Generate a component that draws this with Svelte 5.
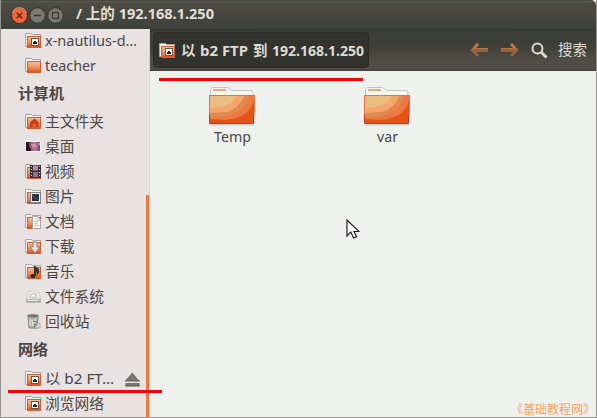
<script>
  const bookmarks = [
    { icon: 'remote', text: 'x-nautilus-d…', width: 92 },
    { icon: 'folder', text: 'teacher', width: 51 }
  ];
  const places = [
    { icon: 'home', text: '主文件夹', width: 59 },
    { icon: 'desktop', text: '桌面', width: 29.5 },
    { icon: 'video', text: '视频', width: 29.5 },
    { icon: 'picture', text: '图片', width: 29.5 },
    { icon: 'document', text: '文档', width: 29.5 },
    { icon: 'download', text: '下载', width: 29.5 },
    { icon: 'music', text: '音乐', width: 29.5 },
    { icon: 'disk', text: '文件系统', width: 59 },
    { icon: 'trash', text: '回收站', width: 44.5 }
  ];
  const network = [
    { icon: 'remote', text: '以 b2 FT…', width: 69, eject: true },
    { icon: 'remote', text: '浏览网络', width: 59 }
  ];
</script>

{#snippet label(text, width, bold = false)}
  <svg class="label" class:bold {width} height="22" viewBox="0 0 {width} 22">
    <text x="0" y="16" textLength={width} lengthAdjust="spacingAndGlyphs">{text}</text>
  </svg>
{/snippet}

{#snippet miniIcon(kind)}
  <svg class="mini" width="17" height="17" viewBox="0 0 17 17">
    {#if kind === 'desktop'}
      <rect x="0.5" y="3" width="15.5" height="11" fill="#faf7f6" />
      <rect x="1" y="4" width="14" height="9" fill="url(#desk)" />
      <path d="M1 4h3v5l2 2v2H1z" fill="#281323" />
      <path d="M6 6h5v2h2V5h2v2h-2v2H7z" fill="#d7a2b7" opacity=".8" />
    {:else if kind === 'disk'}
      <path d="M4 3h9l3 8H1z" fill="#e9e9e6" stroke="#c8c8c4" stroke-width=".7" />
      <path d="M5 8l2-2h4v3l-1 1-2-1-2 1z" fill="#f8f8f6" stroke="#a4a49f" stroke-width=".8" />
      <rect x="1" y="11" width="15" height="3" fill="#b9b9b5" />
      <path d="M1 14h15" stroke="#85857f" stroke-width=".8" />
      <path d="M3 12.5h10" stroke="#efefeb" />
    {:else if kind === 'trash'}
      <path d="M3 4h10l-1 11H4z" fill="#b8b8b3" stroke="#85857f" />
      <ellipse cx="8" cy="3" rx="6" ry="2" fill="#72726c" stroke="#b7b7b2" />
      <path d="M5 6v7M7 7l1 6M10 6v4" stroke="#edede9" />
      <path d="M8 8l4 1M9 14l1-3 3 2z" fill="none" stroke="#696963" stroke-width=".8" />
      <path d="M12 10h3v5h-5v-2h2z" fill="#ddddd8" stroke="#8a8a84" stroke-width=".6" />
    {:else}
      <path d="M.5 14.5v-13h6l1 1h8v12z" fill="#f5f1ef" stroke="#a9a4a3" />
      <rect x="2.5" y="4.5" width="13" height="11" fill="url(#mini-orange)" stroke="#d65a2b" />
      <path d="M3 5.5h12" stroke="#f4c19d" />
      {#if kind === 'remote'}
        <rect x="6.5" y="6.5" width="7" height="7" fill="#fffaf0" stroke="#5f5853" />
        <path d="M8 12v-2h1V9h2v1h1v2z" fill="#24211f" />
      {:else if kind === 'home'}
        <path d="M4 10.2L9.5 5.5l5 4.7h-1V14h-3v-3H8v3H5v-3.8z" fill="#c94017" />
      {:else if kind === 'video'}
        <rect x="5" y="2" width="11" height="13" fill="#383034" />
        <rect x="8" y="2.5" width="5" height="5" fill="#b38bac" /><rect x="8" y="9" width="5" height="5" fill="#9c6994" />
        <path d="M6.5 3v12M14.5 3v12" stroke="#ddd4d4" stroke-dasharray="1 2" />
      {:else if kind === 'picture'}
        <rect x="5.5" y="4.5" width="10" height="10" fill="#f1eeeb" stroke="#827e7c" />
        <rect x="7" y="6" width="7" height="7" fill="#292f42" /><path d="M7 7l6 5" stroke="#59617c" />
      {:else if kind === 'document'}
        <path d="M7.5 3.5h5l3 3v9h-8z" fill="#f8f6f2" stroke="#aaa39e" />
        <path d="M12 4v3h3M9 8.5h5M9 10.5h4M9 12.5h5" fill="none" stroke="#b7b4b0" stroke-width=".8" />
      {:else if kind === 'download'}
        <path d="M8 4h4v5h3l-5 6-5-6h3z" fill="#e4e1de" stroke="#8b807a" />
      {:else if kind === 'music'}
        <path d="M9.5 12V3c1 2 4 2 4 4 1 2 0 3-1 4 0-2 0-3-2-4v6" fill="#3b3230" stroke="#3b3230" stroke-width="1.2" />
        <ellipse cx="7.8" cy="13" rx="2.5" ry="2" fill="#302b2a" />
      {/if}
    {/if}
  </svg>
{/snippet}

{#snippet row(item)}
  <div class="row">
    {@render miniIcon(item.icon)}
    {@render label(item.text, item.width)}
    {#if item.eject}
      <svg class="eject" width="15" height="15" viewBox="0 0 15 15"><path d="M7.2.5L14.5 9H0zM.5 11h14v3H.5z" fill="#77756e" /><path d="M0 9h15M0 14h15" stroke="#5e5b55" /></svg>
    {/if}
  </div>
{/snippet}

{#snippet bigFolder(name, width)}
  <div class="file">
    <svg width="48" height="41" viewBox="0 0 48 41">
      <path d="M2.5 12V3l2-1.5h15l4 3h20.5l1 1.5v7z" fill="#f5f5f2" stroke="#c2c4c0" />
      <path d="M5 4h13" stroke="#eda673" stroke-width="2" />
      <path d="M2 38.8h44" stroke="#bfc1bd" stroke-width="2" opacity=".6" />
      <path d="M1 9h46l-1 29H2z" fill="#e65319" />
      <path d="M1 9h46l-1 5Q42 32 17 34L2 33z" fill="#ee7843" />
      <path d="M1 9h40Q38 23 25 28T2 32z" fill="#e18a50" />
      <path d="M1 9h36Q31 23 19 26L2 27z" fill="#f4a66e" />
      <path d="M1 9h28Q25 18 17 20L2 22z" fill="#ebbd83" />
      <path d="M1 9.5h46M1.5 9v18M46.5 9v18" fill="none" stroke="#e37440" />
      <path d="M1.5 28v9.5h44V28" fill="none" stroke="#bd3e1d" />
    </svg>
    {@render label(name, width)}
  </div>
{/snippet}

<svg class="defs" width="0" height="0">
  <defs>
    <linearGradient id="mini-orange" x2="0" y2="1"><stop stop-color="#f3b78c" /><stop offset=".45" stop-color="#ef9b6b" /><stop offset="1" stop-color="#df4c1b" /></linearGradient>
    <linearGradient id="desk"><stop stop-color="#442039" /><stop offset=".6" stop-color="#bd7d99" /><stop offset="1" stop-color="#803e63" /></linearGradient>
    <linearGradient id="arrow" x2="0" y2="1"><stop stop-color="#bc8c61" /><stop offset=".4" stop-color="#ae744d" /><stop offset=".5" stop-color="#9d5c3a" /></linearGradient>
  </defs>
</svg>

<div class="window">
  <header class="titlebar">
    <svg width="64" height="24" viewBox="0 0 64 24">
      <circle cx="12.5" cy="12.5" r="8" fill="#ee6339" stroke="#30302c" />
      <path d="M5.7 10a7 7 0 0 1 13.6 0" fill="none" stroke="#f49a76" />
      <path d="M9.8 9.8l5.4 5.4m0-5.4l-5.4 5.4" stroke="#5b281b" stroke-width="1.5" />
      <circle cx="30.5" cy="12.5" r="7.8" fill="#7b7a72" stroke="#30302c" />
      <path d="M27 12.5h7" stroke="#3b3b36" stroke-width="1.5" />
      <circle cx="48.5" cy="12.5" r="7.8" fill="#7b7a72" stroke="#30302c" />
      <rect x="45.5" y="9.5" width="6" height="6" fill="none" stroke="#3b3b36" stroke-width="1.3" />
    </svg>
    <div class="title">{@render label('/ 上的 192.168.1.250', 138, true)}</div>
  </header>

  <div class="body">
    <aside>
      {#each bookmarks as item}{@render row(item)}{/each}
      <h2>{@render label('计算机', 46, true)}</h2>
      {#each places as item}{@render row(item)}{/each}
      <h2 class="net">{@render label('网络', 30, true)}</h2>
      {#each network as item}{@render row(item)}{/each}
      <div class="scroll"></div>
    </aside>
    <main>
      <nav>
        <button class="path">
          {@render miniIcon('remote')}
          <span class="words">
            {@render label('以', 14.5, true)}
            {@render label('b2 FTP', 48, true)}
            {@render label('到', 14.5, true)}
            {@render label('192.168.1.250', 92, true)}
          </span>
        </button>
        <svg class="arrow" width="19" height="16" viewBox="0 0 19 16"><path d="M.5 8L7 1l2 2-3 3h12v4H6l3 3-2 2z" fill="url(#arrow)" /></svg>
        <svg class="arrow forward" width="19" height="16" viewBox="0 0 19 16"><path d="M18.5 8L12 1l-2 2 3 3H1v4h12l-3 3 2 2z" fill="url(#arrow)" /></svg>
        <svg class="search" width="17" height="17" viewBox="0 0 17 17"><circle cx="6.5" cy="6.5" r="5" fill="none" stroke="#dedcd6" stroke-width="2" /><path d="M10 10l5.5 5.5" stroke="#dedcd6" stroke-width="2.8" /></svg>
        {@render label('搜索', 29, false)}
      </nav>
      <section>
        {@render bigFolder('Temp', 37)}
        {@render bigFolder('var', 21)}
      </section>
    </main>
  </div>

  <div class="mark top"></div>
  <div class="mark bottom"></div>
  <svg class="cursor" width="14" height="21" viewBox="0 0 14 21"><path d="M1 1v16l3.8-4 2.8 6 3-1.4-2.7-5.1H13z" fill="#fff" stroke="#211c1e" stroke-width="1.2" /></svg>
  <div class="watermark">{@render label('《基础教程网》', 84)}</div>
</div>

<style>
  :global(body) { margin: 0; background: #3c3b37; }
  .defs { position: absolute; }
  .window { position: relative; width: 597px; height: 418px; box-sizing: border-box; overflow: hidden; display: flex; flex-direction: column; background: #eff1ee; border: solid #96948f; border-width: 0 1px 1px; font-family: "Open Sans", "Noto Sans CJK SC", sans-serif; }
  .label { display: block; flex: none; overflow: visible; color: #4c4743; }
  .label text { font-family: "Noto Sans", "Noto Sans CJK SC", sans-serif; font-size: 14.5px; fill: currentColor; }
  .label.bold text { font-weight: 700; }
  .titlebar { height: 29px; box-sizing: border-box; flex: none; display: flex; align-items: flex-start; gap: 5px; padding: 3px 0 0 6px; background: linear-gradient(#363833 0, #5a5952 1px, #4c4b44 3px, #45463f 17px, #3c3f39); border-radius: 0 5px 0 0; }
  .title .label { color: #e3dfd6; }
  .body { display: flex; flex: 1; min-height: 0; }
  aside { position: relative; width: 149px; box-sizing: border-box; flex: none; background: #e8e2e2; border-right: 1px solid #d6d2d0; }
  .row { height: 25px; display: flex; align-items: center; gap: 3px; padding-left: 24px; }
  .row:first-child { margin-top: -1px; }
  .mini { display: block; flex: none; }
  .row .eject { margin-left: 8px; margin-top: 1px; }
  h2 { height: 31px; margin: 0; padding-left: 17px; display: flex; align-items: center; }
  h2.net { height: 32px; }
  .scroll { position: absolute; right: 0; top: 166px; bottom: 0; width: 3px; background: #ed7642; }
  main { flex: 1; min-width: 0; }
  nav { height: 42px; box-sizing: border-box; display: flex; align-items: center; padding-left: 3px; background: linear-gradient(#343630 0, #3b3e38 2px, #3e3f39 16px, #4e4c44 30px, #504e45 40px, #3c3a34); }
  nav .label { color: #dfdbd2; }
  .path { width: 216px; height: 36px; box-sizing: border-box; display: flex; align-items: center; gap: 5px; padding: 0 0 0 5px; margin: 0 101px 0 0; background: #32322e; border: 1px solid #2b2c27; border-radius: 4px; }
  .words { display: flex; gap: 4.7px; padding-top: 2px; }
  .forward { margin-left: 11px; }
  .search { margin-left: 12px; margin-right: 10px; }
  section { display: flex; padding: 15px 0 0 4px; }
  .file { width: 155px; display: flex; flex-direction: column; align-items: center; }
  .file .label { margin-top: -1px; margin-left: 2px; }
  .mark { position: absolute; height: 3px; background: #f80000; }
  .top { left: 158px; top: 78px; width: 204px; }
  .bottom { left: 7px; top: 390px; width: 154px; }
  .cursor { position: absolute; left: 345px; top: 219px; }
  .watermark { position: absolute; left: 510px; top: 398px; }
  .watermark .label { color: #f3a466; }
  .watermark .label text { font-size: 12px; }
</style>
